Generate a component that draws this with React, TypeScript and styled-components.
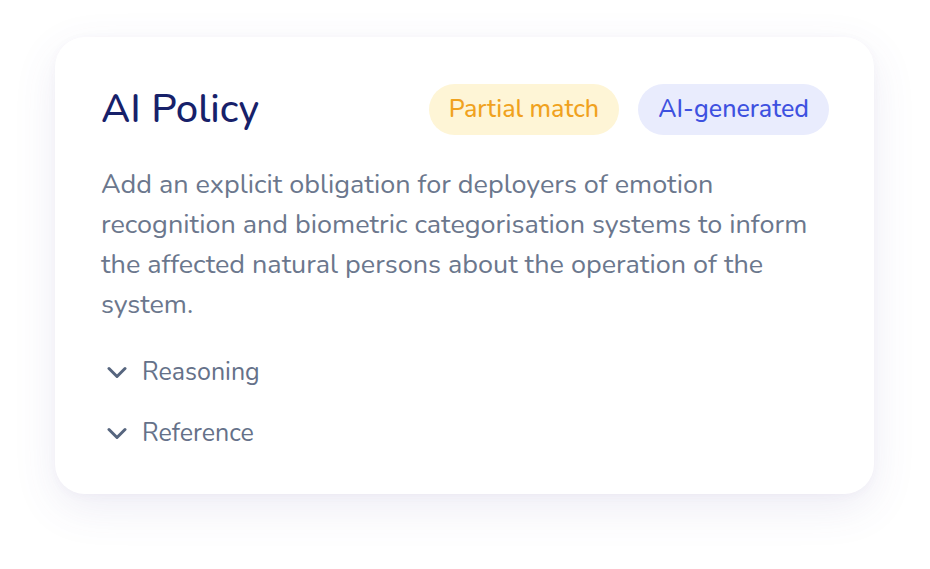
import React from 'react';
import styled, { createGlobalStyle } from 'styled-components';

const GlobalStyle = createGlobalStyle`
    html, body {
        margin: 0;
        padding: 0;
        background: #ffffff;
    }
    body {
        font-family: Nunito, Lato, "Noto Sans", sans-serif;
    }
`

const Page = styled.div`
    box-sizing: border-box;
    min-height: 100vh;
    padding: 37px 56px 0 55px;
`

const Card = styled.article`
    box-sizing: border-box;
    width: 819px;
    height: 457px;
    padding: 40px 45px 0 46px;
    border-radius: 30px;
    background: #ffffff;
    box-shadow: 0 14px 44px rgba(90, 80, 160, 0.1), 0 2px 10px rgba(90, 80, 160, 0.04);
`

const Header = styled.div`
    display: flex;
    align-items: center;
    justify-content: space-between;
    height: 64px;
`

const Title = styled.h2`
    margin: 0;
    font-size: 40px;
    font-weight: 500;
    color: #17216a;
`

const Badges = styled.div`
    display: flex;
    gap: 19px;
`

const Badge = styled.span<{ $tone: 'warning' | 'info' }>`
    display: inline-flex;
    align-items: center;
    height: 51px;
    padding: 0 20px;
    border-radius: 26px;
    font-size: 25px;
    font-weight: 500;
    background: ${({ $tone }) => ($tone === 'warning' ? '#fef5d6' : '#e9ecfd')};
    color: ${({ $tone }) => ($tone === 'warning' ? '#f0a21e' : '#3e51e0')};
`

const Body = styled.p`
    margin: 24px 0 0 0;
    font-size: 27px;
    line-height: 40px;
    color: #6b778d;
`

const Toggles = styled.div`
    display: flex;
    flex-direction: column;
    gap: 23px;
    margin-top: 28px;
`

const Toggle = styled.button`
    display: flex;
    align-items: center;
    gap: 15px;
    padding: 0 0 0 6px;
    border: none;
    background: none;
    font-family: inherit;
    font-size: 25px;
    color: #657189;
    height: 38px;
    cursor: pointer;
`

const Chevron = () => (
    <svg width="20" height="13" viewBox="0 0 20 13" fill="none" stroke="#56657e" strokeWidth="3" strokeLinecap="round" strokeLinejoin="round">
        <path d="M2 2.5l8 8 8-8" />
    </svg>
)

function App() {
    return (
        <Page>
            <GlobalStyle />
            <Card>
                <Header>
                    <Title>AI Policy</Title>
                    <Badges>
                        <Badge $tone="warning">Partial match</Badge>
                        <Badge $tone="info">AI-generated</Badge>
                    </Badges>
                </Header>
                <Body>
                    Add an explicit obligation for deployers of emotion recognition and biometric categorisation systems to inform the affected natural persons about the operation of the system.
                </Body>
                <Toggles>
                    <Toggle><Chevron /> Reasoning</Toggle>
                    <Toggle><Chevron /> Reference</Toggle>
                </Toggles>
            </Card>
        </Page>
    )
}

export default App
